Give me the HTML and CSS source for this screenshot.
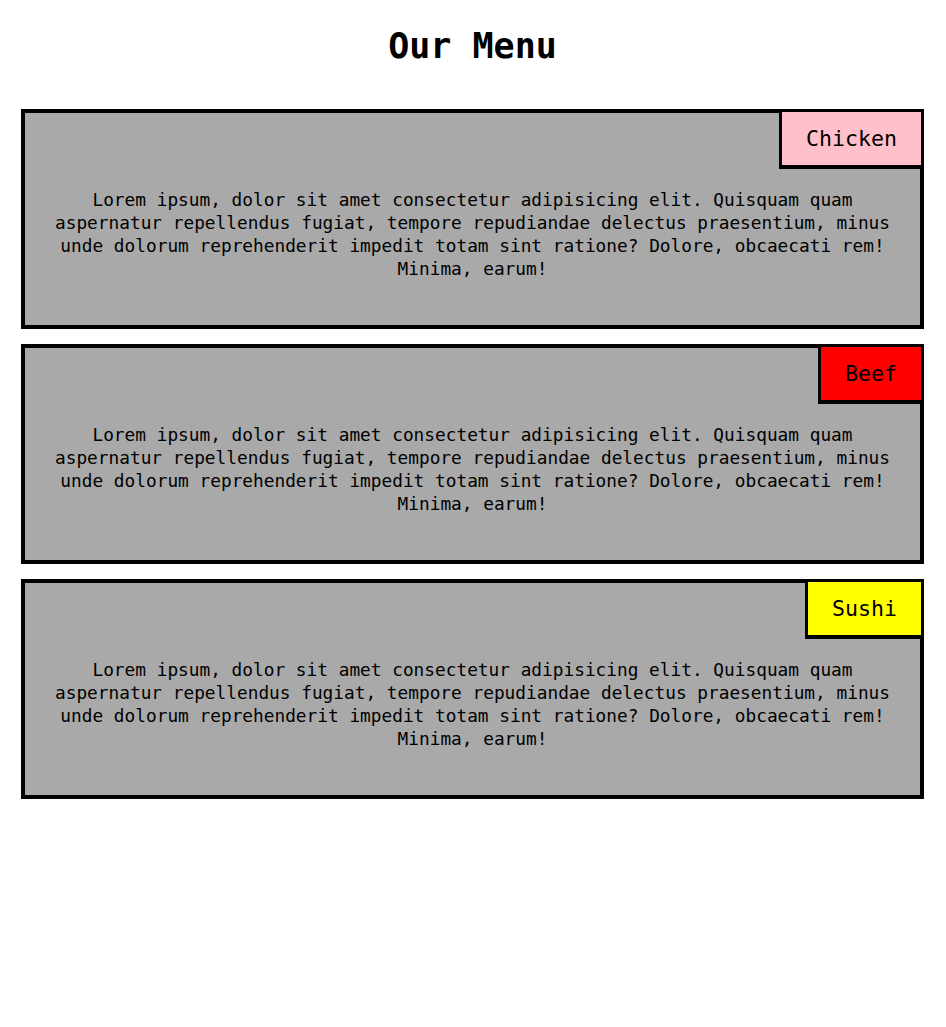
FILE: index.html
```html
<!DOCTYPE html>
<html lang="en">
<head>
<meta charset="utf-8">
<title>Our Menu</title>
<link rel="stylesheet" href="styles.css">
</head>
<body>
<main class="page">
  <h1 class="title">Our Menu</h1>
  <section class="menu">
    <article class="item">
      <span class="tag tag-chicken">Chicken</span>
      <p class="desc">Lorem ipsum, dolor sit amet consectetur adipisicing elit. Quisquam quam aspernatur repellendus fugiat, tempore repudiandae delectus praesentium, minus unde dolorum reprehenderit impedit totam sint ratione? Dolore, obcaecati rem! Minima, earum!</p>
    </article>
    <article class="item">
      <span class="tag tag-beef">Beef</span>
      <p class="desc">Lorem ipsum, dolor sit amet consectetur adipisicing elit. Quisquam quam aspernatur repellendus fugiat, tempore repudiandae delectus praesentium, minus unde dolorum reprehenderit impedit totam sint ratione? Dolore, obcaecati rem! Minima, earum!</p>
    </article>
    <article class="item">
      <span class="tag tag-sushi">Sushi</span>
      <p class="desc">Lorem ipsum, dolor sit amet consectetur adipisicing elit. Quisquam quam aspernatur repellendus fugiat, tempore repudiandae delectus praesentium, minus unde dolorum reprehenderit impedit totam sint ratione? Dolore, obcaecati rem! Minima, earum!</p>
    </article>
  </section>
</main>
</body>
</html>
```

FILE: styles.css
```css
* {
  box-sizing: border-box;
}

html, body {
  margin: 0;
  background: #ffffff;
}

body {
  font-family: "DejaVu Sans Mono", "Liberation Mono", monospace;
  color: #000000;
}

.page {
  padding: 26px 22px 0 21px;
}

.title {
  margin: 0 0 42px;
  font-size: 35px;
  line-height: 41px;
  font-weight: bold;
  text-align: center;
}

.menu {
  display: flex;
  flex-direction: column;
  gap: 15px;
}

.item {
  position: relative;
  height: 220px;
  border: 4px solid #000000;
  background: #a9a9a9;
  padding: 75px 28px 0;
}

.desc {
  margin: 0;
  font-size: 17.8px;
  line-height: 23px;
  text-align: center;
}

.tag {
  position: absolute;
  top: -4px;
  right: -4px;
  border: 3px solid #000000;
  border-bottom-width: 4px;
  padding: 14px 24px 14px;
  font-size: 21.6px;
  line-height: 25px;
}

.tag-chicken {
  background: #ffc0cb;
}

.tag-beef {
  background: #ff0000;
}

.tag-sushi {
  background: #ffff00;
}
```
